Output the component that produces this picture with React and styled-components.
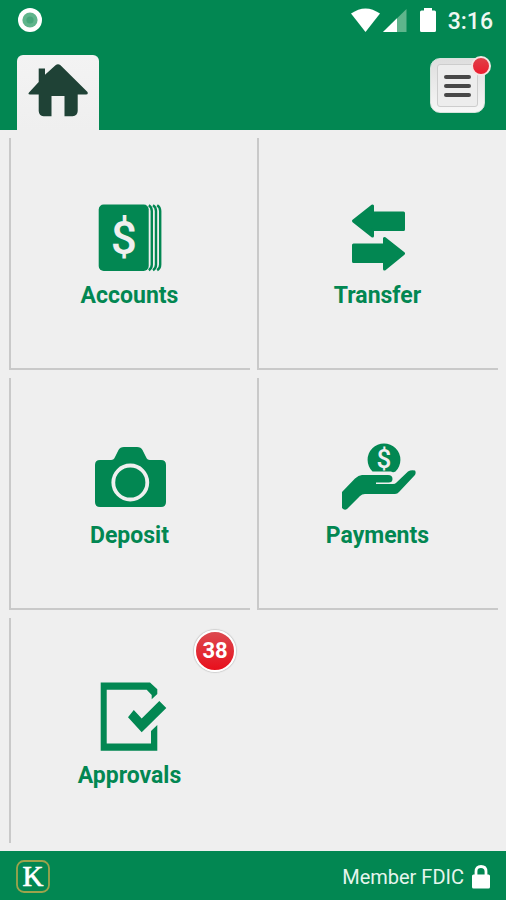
import React from "react";
import styled, { createGlobalStyle, css } from "styled-components";

const GREEN = "#028752";
const PAPER = "#efefef";

const GlobalStyle = createGlobalStyle`
  *, *::before, *::after { box-sizing: border-box; }
  body {
    margin: 0;
    background: ${PAPER};
    font-family: Roboto, "Liberation Sans", sans-serif;
  }
`;

const Page = styled.div`
  display: flex;
  flex-direction: column;
  min-height: 100vh;
`;

const Header = styled.header`
  background: ${GREEN};
  color: #fff;
`;

const StatusBar = styled.div`
  display: flex;
  align-items: center;
  justify-content: space-between;
  height: 40px;
  padding: 0 13px 0 18px;
`;

const StatusIcons = styled.div`
  display: flex;
  align-items: center;
`;

const Clock = styled.time`
  padding: 3px 0 0 12px;
  font-size: 23px;
  line-height: 26px;
  font-weight: 500;
  color: #eef8f2;
`;

const NavBar = styled.nav`
  display: flex;
  justify-content: space-between;
  align-items: flex-start;
  height: 90px;
  padding: 15px 21px 0 17px;
`;

const HomeTab = styled.a`
  display: flex;
  justify-content: center;
  width: 82px;
  height: 75px;
  padding-top: 9px;
  border-radius: 6px 6px 0 0;
  background: linear-gradient(#f3f3f3, ${PAPER});
`;

const MenuButton = styled.button`
  position: relative;
  display: flex;
  align-items: center;
  justify-content: center;
  width: 55px;
  height: 55px;
  margin-top: 3px;
  padding: 0;
  border: 1px solid #d5e3dc;
  border-radius: 10px;
  background: linear-gradient(#dedede, #f7f7f7);
  cursor: pointer;
`;

const MenuFace = styled.span`
  display: flex;
  flex-direction: column;
  align-items: center;
  justify-content: center;
  gap: 5px;
  width: 41px;
  height: 43px;
  border: 1px solid #cdcdcd;
  border-radius: 3px;
  background: #ededed;
`;

const MenuLine = styled.span`
  width: 27px;
  height: 4px;
  border-radius: 2px;
  background: #484848;
`;

const AlertDot = styled.span`
  position: absolute;
  top: -3px;
  right: -7px;
  width: 20px;
  height: 20px;
  border: 2px solid #f3e6e4;
  border-radius: 50%;
  background: linear-gradient(#df3f48, #ec1c2e);
`;

const TileGrid = styled.main`
  flex: 1;
  display: grid;
  grid-template-columns: 1fr 1fr;
  grid-template-rows: 232px 232px minmax(200px, 1fr);
  gap: 8px 7px;
  padding: 8px 8px 8px 9px;
`;

const Tile = styled.a`
  position: relative;
  display: flex;
  flex-direction: column;
  align-items: center;
  padding: 64px 2px 0 0;
  border-left: 2px solid #c9c9c9;
  color: ${GREEN};
  text-decoration: none;
  ${({ $ruled }) => $ruled && css`border-bottom: 2px solid #c9c9c9;`}
`;

const TileLabel = styled.span`
  margin-top: 8px;
  font-size: 23px;
  line-height: 28px;
  font-weight: 700;
`;

const CountBadge = styled.span`
  position: absolute;
  top: 12px;
  right: 14px;
  display: flex;
  align-items: center;
  justify-content: center;
  width: 42px;
  height: 42px;
  border: 2px solid #fff;
  border-radius: 50%;
  background: linear-gradient(#dc4a50, #e80f1c);
  box-shadow: 0 0 1px 1px #cfcfcf;
  color: #fff;
  font-size: 22px;
  line-height: 24px;
  font-weight: 700;
`;

const Footer = styled.footer`
  display: flex;
  align-items: center;
  justify-content: space-between;
  height: 49px;
  padding: 2px 15px 0 16px;
  background: ${GREEN};
  color: #e6f5ed;
`;

const Member = styled.span`
  display: flex;
  align-items: center;
  gap: 7px;
  font-size: 20px;
  line-height: 24px;
`;

const RecordIcon = () => (
  <svg width="24" height="24" viewBox="0 0 24 24" aria-hidden="true">
    <circle cx="12" cy="12" r="12" fill="#fff" />
    <circle cx="12" cy="12" r="7.6" fill="#5fb58c" />
    <circle cx="12" cy="12" r="3.6" fill="#46a67a" />
  </svg>
);

const SignalIcons = () => (
  <svg width="85" height="24" viewBox="0 0 85 24" aria-hidden="true">
    <path d="M0 5.6Q14.500-4.800 29 5.600L14.500 24Z" fill="#fff" />
    <path d="M55.500 1V24H32Z" fill="#5fb58c" />
    <path d="M46 10.300V24H32Z" fill="#fff" />
    <path d="M69.500 2.500H73V0H81V2.500H83.500Q85 2.500 85 4V22.500Q85 24 83.500 24H70.500Q69 24 69 22.500V4Q69 2.500 70.500 2.500Z" fill="#fff" />
  </svg>
);

const HomeIcon = () => (
  <svg width="60" height="54" viewBox="0 0 60 54" aria-hidden="true">
    <path
      d="M27.500 1.200Q30 -.8 32.500 1.200L59.500 28Q60.500 30.500 58 30.500H49.700V47Q49.500 51.800 44.500 52.300H36.500V32H23.500V52.300H15.500Q11 51.800 10.700 47V30.500H2Q-.5 30.500 1 28.500L10.700 18V4.600H17V10.800Z"
      fill="#1f4236"
    />
  </svg>
);

const TileSvg = ({ children }) => (
  <svg width="80" height="72" viewBox="0 0 80 72" fill="currentColor" aria-hidden="true">
    {children}
  </svg>
);

const AccountsIcon = () => (
  <TileSvg>
    <rect x="8.700" y="2.500" width="50" height="66.500" rx="5" />
    <g fill="none" stroke="currentColor" strokeWidth="2.400">
      <path d="M58.800 3.200Q61.800 5 61.800 9V62.500Q61.800 66.500 58.800 68.300" />
      <path d="M63 3.200Q66 5 66 9V62.500Q66 66.500 63 68.300" />
      <path d="M67.200 3.200Q70.200 5 70.200 9V62.500Q70.200 66.500 67.200 68.300" />
    </g>
    <text x="33.800" y="52" textAnchor="middle" fill="#efefef" fontFamily="Roboto" fontWeight="500" fontSize="46">$</text>
  </TileSvg>
);

const TransferIcon = () => (
  <TileSvg>
    <g stroke="currentColor" strokeWidth="3" strokeLinejoin="round">
      <path d="M15.500 19L34.500 4V11H65.500V27.500H34.500V34Z" />
      <path d="M65.500 51.500L46.500 36.500V43H15.500V59.500H46.500V67Z" />
    </g>
  </TileSvg>
);

const CameraIcon = () => (
  <TileSvg>
    <path d="M10 18H21Q24 18 25 15L28.500 8Q30 4.900 34 4.900H47Q51 4.900 52.500 8L56 15Q57 18 60 18H71Q76 18 76 23V60Q76 65 71 65H10Q5 65 5 60V23Q5 18 10 18Z" />
    <circle cx="40.300" cy="40.500" r="17" fill="none" stroke="#efefef" strokeWidth="3.800" />
  </TileSvg>
);

const PaymentsIcon = () => (
  <TileSvg>
    <path d="M34.500 29.500A16.400 16.400 0 1 1 57.500 29.500Q55 30.800 53 29.500Z" />
    <path d="M4 50L17 36.500Q20.500 33 24 33H50Q54.500 33 54.500 37Q54.500 40.500 50.500 40.500H38V42H55Q57 42 58.500 40.500L70 29.500Q73 27.500 77 28.500Q78.500 31 76.500 33.500L61 50Q59.500 52 57 52H27Q24 52 22 54L9 67Q6.500 69 4 66Z" />
    <text x="46" y="26" textAnchor="middle" fill="#efefef" fontFamily="Roboto" fontWeight="500" fontSize="26">$</text>
  </TileSvg>
);

const ApprovalsIcon = () => (
  <TileSvg>
    <path d="M10.700 .5H60L67.300 7.300V12L61.700 17.300V13L56.700 7.700H16.700V61.500H61V49L67.300 43V68.700H10.700Z" />
    <path d="M38 35.300L43.800 28L51.700 36.500L69.300 19L76.300 26L51.700 50.300Z" />
  </TileSvg>
);

const BankLogo = () => (
  <svg width="34" height="33" viewBox="0 0 34 33" role="img" aria-label="K">
    <rect x="1" y="1" width="32" height="31" rx="7" fill="none" stroke="#9da34c" strokeWidth="1.800" />
    <text x="17" y="26" textAnchor="middle" fill="#fff" stroke="#fff" strokeWidth=".7" fontFamily="Liberation Serif" fontSize="29">K</text>
  </svg>
);

const LockIcon = () => (
  <svg width="20" height="24" viewBox="0 0 20 24" aria-hidden="true">
    <path d="M5 11V6.500Q5 1.500 10 1.500T15 6.500V11" fill="none" stroke="#fff" strokeWidth="2.800" />
    <rect x="1" y="9.500" width="18" height="14" rx="1.500" fill="#fff" />
  </svg>
);

const tiles = [
  { label: "Accounts", Icon: AccountsIcon, ruled: true },
  { label: "Transfer", Icon: TransferIcon, ruled: true },
  { label: "Deposit", Icon: CameraIcon, ruled: true },
  { label: "Payments", Icon: PaymentsIcon, ruled: true },
  { label: "Approvals", Icon: ApprovalsIcon, ruled: false, count: 38 },
];

export default function App() {
  return (
    <Page>
      <GlobalStyle />
      <Header>
        <StatusBar>
          <RecordIcon />
          <StatusIcons>
            <SignalIcons />
            <Clock>3:16</Clock>
          </StatusIcons>
        </StatusBar>
        <NavBar>
          <HomeTab href="#home" aria-label="Home">
            <HomeIcon />
          </HomeTab>
          <MenuButton type="button" aria-label="Menu">
            <MenuFace>
              <MenuLine />
              <MenuLine />
              <MenuLine />
            </MenuFace>
            <AlertDot />
          </MenuButton>
        </NavBar>
      </Header>
      <TileGrid>
        {tiles.map(({ label, Icon, ruled, count }) => (
          <Tile key={label} href={`#${label.toLowerCase()}`} $ruled={ruled}>
            <Icon />
            <TileLabel>{label}</TileLabel>
            {count && <CountBadge>{count}</CountBadge>}
          </Tile>
        ))}
      </TileGrid>
      <Footer>
        <BankLogo />
        <Member>
          Member FDIC
          <LockIcon />
        </Member>
      </Footer>
    </Page>
  );
}
